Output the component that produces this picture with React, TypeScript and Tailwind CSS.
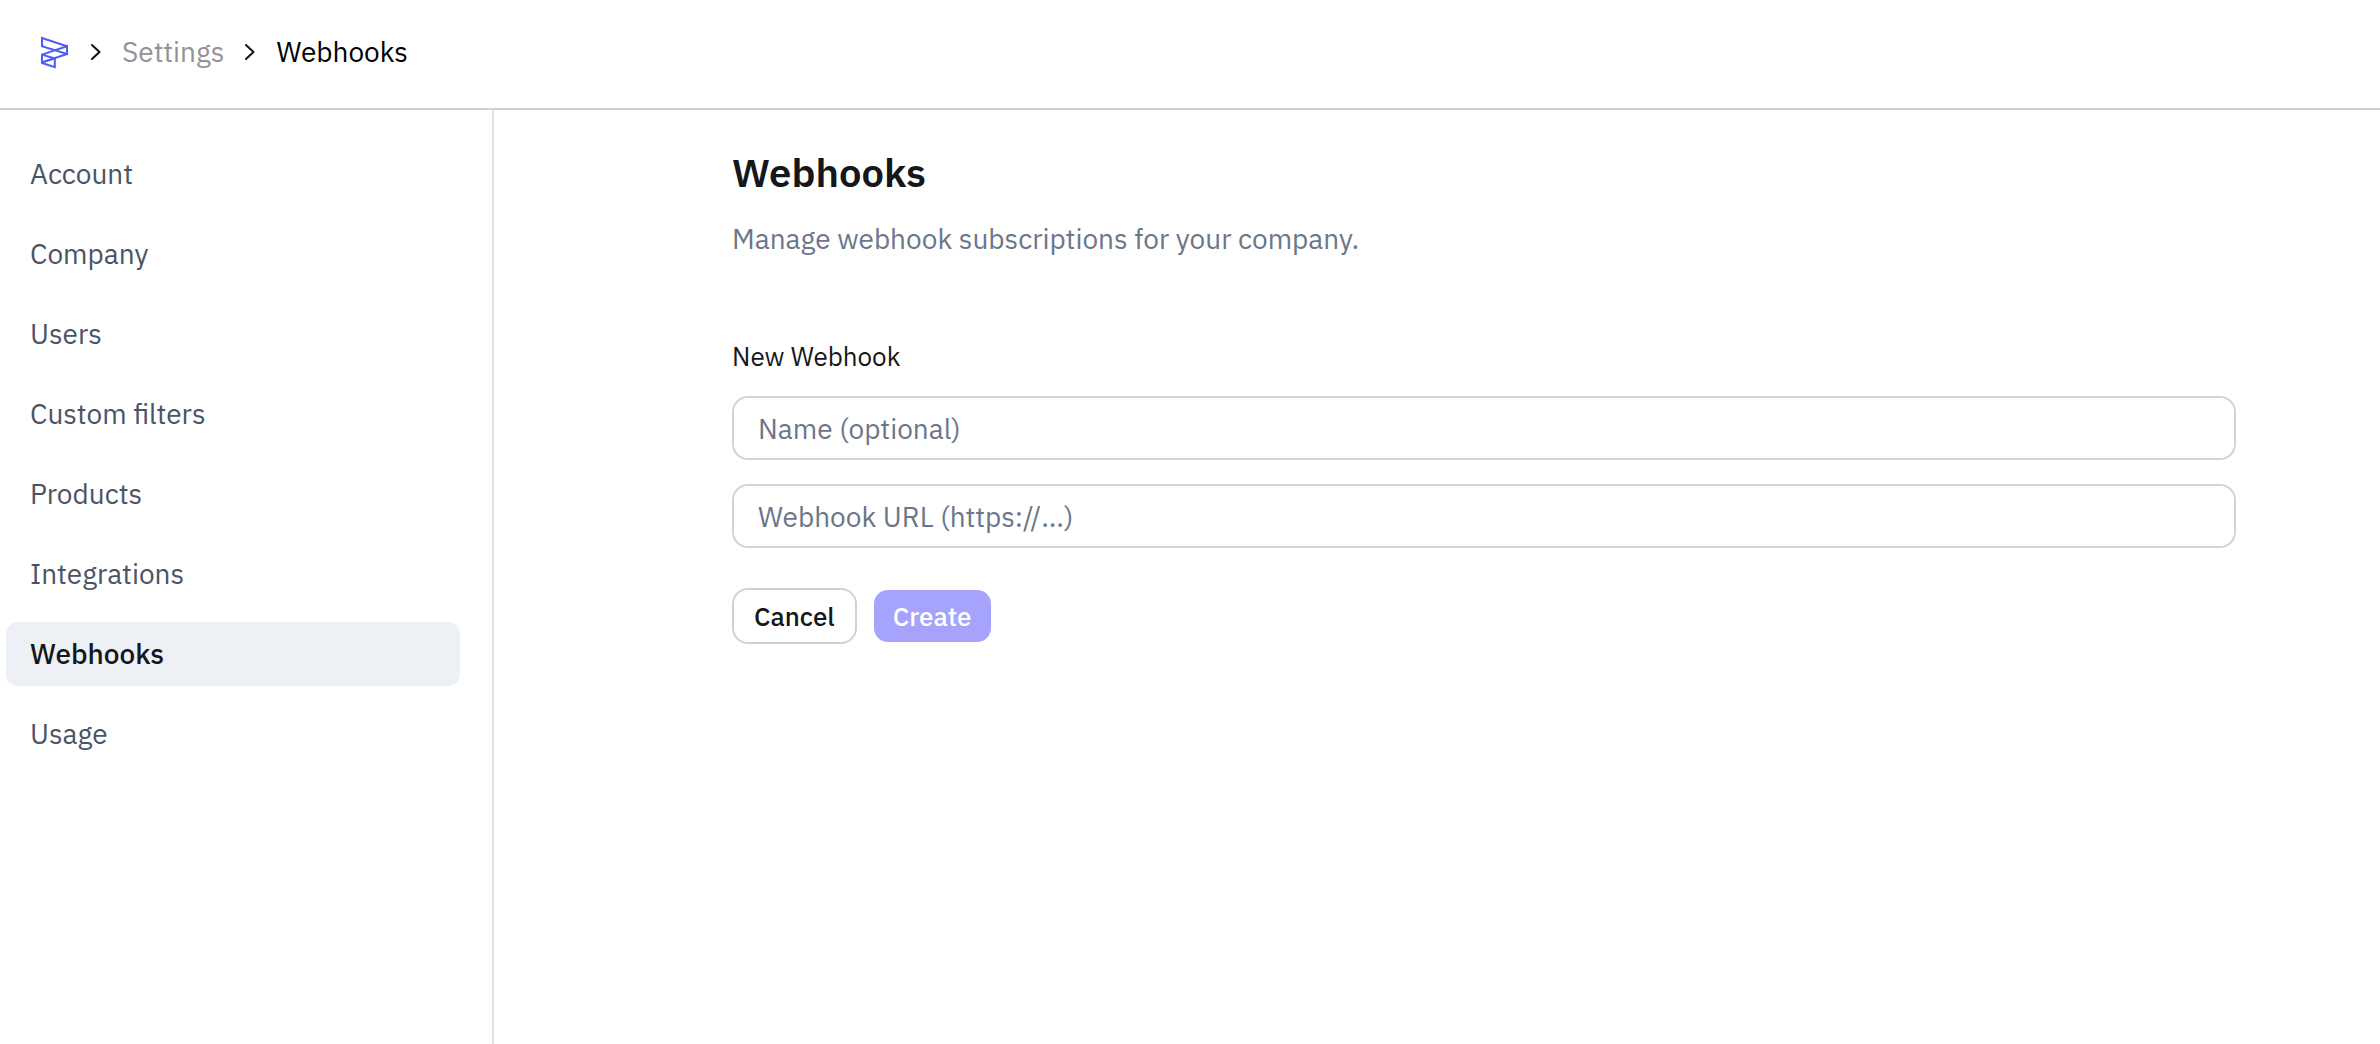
import { useState } from "react";

const navItems = ["Account", "Company", "Users", "Custom filters", "Products", "Integrations", "Webhooks", "Usage"];

function Logo() {
  return (
    <svg viewBox="0 0 30 33" className="h-[33px] w-[30px]" fill="none" stroke="#4f5bf8" strokeWidth="2" aria-hidden="true">
      <path d="M2 2 27 10.2 V18 L2 10.2 Z" />
      <path d="M27 10.2 V18 L2 26.4 V18.6 Z" />
      <path d="M2 18.6 14.8 22.6 V31.2 L2 27" />
      <path d="M2 26.4 14.8 22.4" />
    </svg>
  );
}

function Chevron() {
  return (
    <svg viewBox="0 0 10 18" className="h-[18px] w-2.5" fill="none" stroke="#111214" strokeWidth="2" strokeLinecap="round" strokeLinejoin="round" aria-hidden="true">
      <path d="M1 2 L8.5 9 L1 16" />
    </svg>
  );
}

function TextField({ label, value, onChange }: { label: string; value: string; onChange: (value: string) => void }) {
  return (
    <input
      aria-label={label}
      value={value}
      onChange={(e) => onChange(e.target.value)}
      placeholder={label}
      className="block h-16 w-full rounded-2xl border-2 border-[#cdd4e0] bg-white px-6 text-[28px] outline-none placeholder:text-[#6b7689]"
    />
  );
}

export default function App() {
  const [name, setName] = useState("");
  const [url, setUrl] = useState("");

  return (
    <div className="flex min-h-screen flex-col bg-white font-['IBM_Plex_Sans','Roboto',sans-serif] text-[28px] leading-9 text-[#15171a]">
      <header className="flex h-[110px] items-center gap-[21px] border-b-2 border-[#d2d2d4] px-10 pb-1">
        <a href="#" aria-label="Home"><Logo /></a>
        <Chevron />
        <a href="#settings" className="text-[#929297]">Settings</a>
        <Chevron />
        <span className="text-black">Webhooks</span>
      </header>
      <div className="flex grow">
        <nav aria-label="Settings" className="flex w-[494px] shrink-0 flex-col gap-4 border-r-2 border-[#e0e4ea] pt-8 pr-8 pl-1.5">
          {navItems.map((item) => (
            <a
              key={item}
              href="#"
              aria-current={item === "Webhooks" ? "page" : undefined}
              className={
                item === "Webhooks"
                  ? "flex h-16 items-center rounded-xl bg-[#edf0f5] px-6 font-medium text-[#15171a]"
                  : "flex h-16 items-center rounded-xl px-6 text-[#4b5466]"
              }
            >
              {item}
            </a>
          ))}
        </nav>
        <main className="min-w-0 grow pt-[34px] pr-36 pl-[238px]">
          <h1 className="text-[40px] leading-[56px] font-semibold">Webhooks</h1>
          <p className="mt-[21px] text-[#6b7689]">Manage webhook subscriptions for your company.</p>
          <form onSubmit={(e) => e.preventDefault()}>
            <h2 className="mt-[81px] text-[26px]">New Webhook</h2>
            <div className="mt-[22px] flex flex-col gap-6">
              <TextField label="Name (optional)" value={name} onChange={setName} />
              <TextField label="Webhook URL (https://...)" value={url} onChange={setUrl} />
            </div>
            <div className="mt-10 flex items-center gap-[17px] text-[26px] font-medium">
              <button type="button" className="h-14 rounded-2xl border-2 border-[#d2d2d4] px-5">Cancel</button>
              <button type="submit" disabled className="h-[52px] rounded-[14px] bg-[#a5a3fb] px-[19px] text-white">Create</button>
            </div>
          </form>
        </main>
      </div>
    </div>
  );
}
